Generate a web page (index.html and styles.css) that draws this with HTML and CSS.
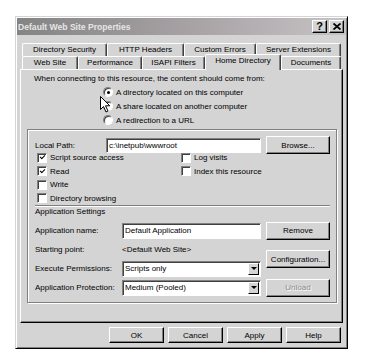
FILE: index.html
```html
<!DOCTYPE html>
<html lang="en">
<head>
  <meta charset="UTF-8" />
  <title>Default Web Site Properties</title>
  <link rel="stylesheet" href="styles.css">
</head>
<body>
  <div class="dialog">
    <div class="titlebar">
      <span class="title">Default Web Site Properties</span>
      <div class="caption-buttons">
        <span class="cap-btn">?</span>
        <span class="cap-btn">
          <svg width="8" height="7" viewBox="0 0 8 7"><path d="M0.5 0.5 L7.5 6.5 M7.5 0.5 L0.5 6.5" stroke="#000" stroke-width="1.8"/></svg>
        </span>
      </div>
    </div>
    <div class="dialog-body">
      <div class="tabs">
        <div class="tab-row back">
          <div class="tab">Directory Security</div>
          <div class="tab">HTTP Headers</div>
          <div class="tab">Custom Errors</div>
          <div class="tab">Server Extensions</div>
        </div>
        <div class="tab-row front">
          <div class="tab">Web Site</div>
          <div class="tab">Performance</div>
          <div class="tab">ISAPI Filters</div>
          <div class="tab active">Home Directory</div>
          <div class="tab">Documents</div>
        </div>
      </div>
      <div class="panel">
        <p class="intro">When connecting to this resource, the content should come from:</p>
        <div class="radios">
          <div class="radio checked"><span class="circle"></span>A directory located on this computer</div>
          <div class="radio"><span class="circle"></span>A share located on another computer</div>
          <div class="radio"><span class="circle"></span>A redirection to a URL</div>
          <svg class="cursor" width="12" height="17" viewBox="0 0 12 17">
            <path d="M0.5 0.5 L0.5 13.5 L3.5 10.5 L6 16 L8 15 L5.5 9.8 L9.8 9.8 Z" fill="#fff" stroke="#000" stroke-width="1"/>
          </svg>
        </div>
        <div class="group">
          <div class="path-row">
            <span class="path-label">Local Path:</span>
            <span class="field path-field">c:\inetpub\wwwroot</span>
            <span class="btn side-btn">Browse...</span>
          </div>
          <div class="checks">
            <div class="check on"><span class="box"></span>Script source access</div>
            <div class="check"><span class="box"></span>Log visits</div>
            <div class="check on"><span class="box"></span>Read</div>
            <div class="check"><span class="box"></span>Index this resource</div>
            <div class="check"><span class="box"></span>Write</div>
            <div></div>
            <div class="check"><span class="box"></span>Directory browsing</div>
          </div>
          <div class="separator"></div>
          <div class="section-label">Application Settings</div>
          <div class="app-grid">
            <span class="label">Application name:</span>
            <span class="field">Default Application</span>
            <span class="btn side-btn">Remove</span>

            <span class="label">Starting point:</span>
            <span class="value">&lt;Default Web Site&gt;</span>
            <span class="btn side-btn config">Configuration...</span>

            <span class="label">Execute Permissions:</span>
            <span class="field select">Scripts only<span class="drop"></span></span>

            <span class="label">Application Protection:</span>
            <span class="field select">Medium (Pooled)<span class="drop"></span></span>
            <span class="btn side-btn disabled">Unload</span>
          </div>
        </div>
      </div>
      <div class="dialog-buttons">
        <span class="btn">OK</span>
        <span class="btn">Cancel</span>
        <span class="btn">Apply</span>
        <span class="btn">Help</span>
      </div>
    </div>
  </div>
</body>
</html>
```

FILE: styles.css
```css
body {
  margin: 0;
  background: #fff;
  font-family: 'Liberation Sans', Arial, sans-serif;
  font-size: 8px;
  color: #000;
}
.dialog {
  margin: 16px 0 0 15px;
  width: 333px;
  height: 333px;
  box-sizing: border-box;
  background: #d4d4d4;
  border: 1px solid;
  border-color: #d4d4d4 #000 #000 #d4d4d4;
  box-shadow: inset 1px 1px #fff, inset -1px -1px #808080;
  padding: 1px;
  display: flex;
  flex-direction: column;
}
.titlebar {
  height: 17px;
  flex-shrink: 0;
  display: flex;
  justify-content: space-between;
  align-items: center;
  padding: 0 2px 0 1px;
  background: linear-gradient(to right, #848484, #a9a3a6 55%, #c6c3c5);
}
.title {
  font-size: 8.6px;
  font-weight: bold;
  color: #e6e6e6;
}
.caption-buttons {
  display: flex;
  gap: 2px;
}
.cap-btn {
  width: 15px;
  height: 13px;
  box-sizing: border-box;
  background: #d4d4d4;
  border: 1px solid;
  border-color: #fff #000 #000 #fff;
  box-shadow: inset -1px -1px #808080;
  display: flex;
  align-items: center;
  justify-content: center;
  font-weight: bold;
  font-size: 11px;
  line-height: 1;
}
.dialog-body {
  flex: 1;
  display: flex;
  flex-direction: column;
  padding: 8px 3px 5px 3px;
}
.tabs {
  padding: 0 2px;
}
.tab-row {
  display: flex;
}
.tab {
  height: 13px;
  box-sizing: border-box;
  line-height: 12px;
  text-align: center;
  white-space: nowrap;
  border: 1px solid;
  border-bottom: none;
  border-color: #fff #404040 transparent #fff;
  box-shadow: inset -1px 0 #808080;
  border-radius: 2px 2px 0 0;
}
.back .tab:nth-child(1) { width: 85px; }
.back .tab:nth-child(2) { width: 77px; }
.back .tab:nth-child(3) { width: 72px; }
.back .tab:nth-child(4) { width: 85px; }
.front .tab:nth-child(1) { width: 56px; }
.front .tab:nth-child(2) { width: 64px; }
.front .tab:nth-child(3) { width: 63px; }
.front .tab:nth-child(4) { width: 76px; }
.front .tab:nth-child(5) { width: 60px; }
.tab.active {
  height: 16px;
  margin-top: -2px;
  margin-bottom: -1px;
  position: relative;
  z-index: 1;
  background: #d4d4d4;
}
.panel {
  height: 254px;
  box-sizing: border-box;
  border: 1px solid;
  border-color: #fff #000 #000 #fff;
  box-shadow: inset -1px -1px #808080;
  padding: 3px 5px 0 6px;
}
.intro {
  margin: 0 0 0 7px;
  line-height: 12px;
}
.radios {
  position: relative;
  padding-left: 82px;
  margin-left: -6px;
}
.radio {
  height: 14px;
  display: flex;
  align-items: center;
  gap: 3px;
}
.circle {
  width: 10px;
  height: 10px;
  box-sizing: border-box;
  border-radius: 50%;
  background: #fff;
  border: 1px solid;
  border-color: #808080 #fff #fff #808080;
  box-shadow: inset 1px 1px #404040;
  display: flex;
  align-items: center;
  justify-content: center;
}
.radio.checked .circle::after {
  content: '';
  width: 3px;
  height: 3px;
  border-radius: 50%;
  background: #000;
}
.cursor {
  position: absolute;
  left: 79px;
  top: 11px;
}
.group {
  margin-top: 2px;
  height: 174px;
  box-sizing: border-box;
  border: 1px solid #808080;
  box-shadow: inset 1px 1px #fff, 1px 1px #fff;
  padding: 6px 6px 0 7px;
}
.path-row {
  display: flex;
  align-items: center;
  height: 18px;
}
.path-label {
  width: 71px;
}
.field {
  height: 15px;
  box-sizing: border-box;
  background: #fff;
  border: 1px solid;
  border-color: #808080 #fff #fff #808080;
  box-shadow: inset 1px 1px #404040;
  padding: 0 2px;
  line-height: 13px;
  white-space: nowrap;
  display: flex;
  align-items: center;
}
.path-field {
  width: 155px;
}
.btn {
  height: 18px;
  box-sizing: border-box;
  background: #d4d4d4;
  border: 1px solid;
  border-color: #fff #000 #000 #fff;
  box-shadow: inset -1px -1px #808080;
  display: flex;
  align-items: center;
  justify-content: center;
}
.side-btn {
  width: 64px;
  margin-left: 5px;
}
.btn.disabled {
  color: #8a8a8a;
  text-shadow: 1px 1px #fff;
}
.checks {
  display: grid;
  grid-template-columns: 144px auto;
  grid-auto-rows: 13.5px;
  padding-left: 2px;
  margin-top: -3px;
}
.check {
  display: flex;
  align-items: center;
  gap: 3px;
}
.box {
  width: 10px;
  height: 10px;
  box-sizing: border-box;
  background: #fff;
  border: 1px solid;
  border-color: #808080 #fff #fff #808080;
  box-shadow: inset 1px 1px #404040;
  display: flex;
  align-items: center;
  justify-content: center;
}
.check.on .box::after {
  content: '';
  width: 4px;
  height: 2px;
  margin: -2px 0 0 1px;
  border-left: 1.5px solid #000;
  border-bottom: 1.5px solid #000;
  transform: rotate(-45deg);
}
.separator {
  height: 0;
  border-top: 1px solid #808080;
  border-bottom: 1px solid #fff;
}
.section-label {
  line-height: 11px;
  margin-top: -1px;
}
.app-grid {
  display: grid;
  grid-template-columns: 87px 139px 69px;
  grid-template-rows: repeat(4, 17px);
  row-gap: 2px;
  margin-top: 5px;
  align-items: center;
}
.app-grid .field {
  height: 16px;
}
.app-grid .config {
  grid-column: 3;
  grid-row: 2 / span 2;
}
.app-grid .label,
.app-grid .value {
  white-space: nowrap;
}
.select {
  position: relative;
  padding-right: 14px;
}
.drop {
  position: absolute;
  right: 1px;
  top: 1px;
  bottom: 1px;
  width: 11px;
  box-sizing: border-box;
  background: #d4d4d4;
  border: 1px solid;
  border-color: #fff #000 #000 #fff;
  display: flex;
  align-items: center;
  justify-content: center;
}
.drop::after {
  content: '';
  border: 3px solid transparent;
  border-top: 3px solid #000;
  border-bottom: none;
}
.dialog-buttons {
  margin-top: 4px;
  display: flex;
  justify-content: flex-end;
  gap: 4px;
  padding-right: 2px;
}
.dialog-buttons .btn {
  width: 55px;
  height: 16px;
}
```
